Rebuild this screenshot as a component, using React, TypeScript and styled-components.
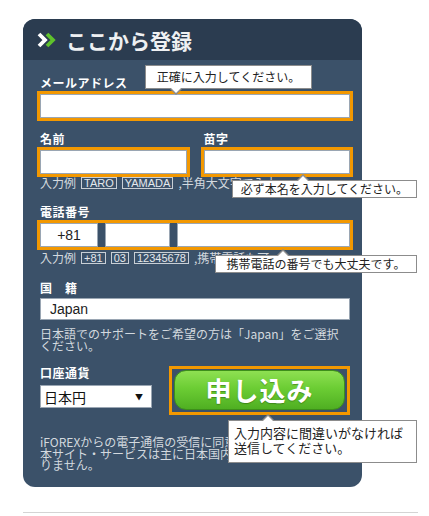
import styled, { createGlobalStyle } from "styled-components";

const GlobalStyle = createGlobalStyle`
  body {
    margin: 0;
    background: #fff;
    font-family: "Noto Sans CJK JP", "Noto Sans", sans-serif;
  }
`;

function Chevrons() {
  return (
    <svg width="22" height="16" viewBox="0 0 22 16">
      <polyline points="2,2 8,8 2,14" fill="none" stroke="#fff" strokeWidth="3.8" />
      <polyline points="10,2 16,8 10,14" fill="none" stroke="#5fc22c" strokeWidth="3.8" />
    </svg>
  );
}

export default function App() {
  return (
    <Page>
      <GlobalStyle />
      <Card>
        <Header>
          <Chevrons />
          <Title>ここから登録</Title>
        </Header>
        <Body>
          <Label>メールアドレス</Label>
          <Frame>
            <Input />
          </Frame>

          <NameGrid>
            <div>
              <Label>名前</Label>
              <Frame>
                <Input />
              </Frame>
            </div>
            <div>
              <Label>苗字</Label>
              <Frame>
                <Input />
              </Frame>
            </div>
          </NameGrid>
          <Help>
            入力例<Tag>TARO</Tag>
            <Tag>YAMADA</Tag>,半角大文字で入力
          </Help>

          <Label $mt={16}>電話番号</Label>
          <PhoneFrame>
            <Input $w={58} $center defaultValue="+81" />
            <Input $w={65} />
            <Input />
          </PhoneFrame>
          <Help $mt={2}>
            入力例<Tag>+81</Tag>
            <Tag>03</Tag>
            <Tag>12345678</Tag>,携帯電話も可
          </Help>

          <Label $mt={17} $mb={3}>国　籍</Label>
          <CountryInput defaultValue="Japan" />
          <Note>
            日本語でのサポートをご希望の方は「Japan」をご選択ください。
          </Note>

          <SubmitRow>
            <div>
              <Label $mt={0} $mb={5}>口座通貨</Label>
              <Select>
                <span>日本円</span>
                <Arrow>▼</Arrow>
              </Select>
            </div>
            <ButtonFrame>
              <SubmitButton>申し込み</SubmitButton>
            </ButtonFrame>
          </SubmitRow>

          <Footer>
            iFOREXからの電子通信の受信に同意します。
            <br />
            本サイト・サービスは主に日本国内の居住者向けではありません。
          </Footer>
        </Body>

        <Tip $left={122} $top={46} $w={167} $h={24} $arrow={30} $down>
          正確に入力してください。
        </Tip>
        <Tip $left={209} $top={161} $w={185} $h={18} $arrow={70}>
          必ず本名を入力してください。
        </Tip>
        <Tip $left={192} $top={236} $w={202} $h={18} $arrow={67}>
          携帯電話の番号でも大丈夫です。
        </Tip>
        <Tip $left={205} $top={401} $w={189} $h={43} $arrow={39} $big>
          入力内容に間違いがなければ
          <br />
          送信してください。
        </Tip>
      </Card>
      <Rule />
    </Page>
  );
}

const Page = styled.div`
  padding: 19px 0 0 23px;
`;

const Card = styled.div`
  position: relative;
  width: 339px;
  border-radius: 12px;
  background: #3b5169;
`;

const Header = styled.div`
  height: 41px;
  box-sizing: border-box;
  padding: 1px 0 0 14px;
  background: #2b3c50;
  border-radius: 12px 12px 0 0;
  display: flex;
  align-items: center;
  gap: 7px;
`;

const Title = styled.h1`
  margin: 0;
  font-size: 21px;
  line-height: 1;
  font-weight: 700;
  color: #eef0f2;
`;

const Body = styled.div`
  padding: 16px 12px 16px 17px;
`;

const Label = styled.div<{ $mt?: number; $mb?: number }>`
  margin: ${(p) => p.$mt ?? 0}px 0 ${(p) => p.$mb ?? 1}px;
  font-size: 12px;
  line-height: 14px;
  font-weight: 700;
  letter-spacing: 0.5px;
  color: #fff;
`;

const Frame = styled.div`
  margin: 0 -3px;
  border: 3px solid #f39800;
  display: flex;
`;

const PhoneFrame = styled(Frame)`
  gap: 7px;
`;

const Input = styled.input<{ $w?: number; $center?: boolean }>`
  box-sizing: border-box;
  height: 24px;
  margin: 0;
  padding: 0 6px;
  border: 1px solid #9aa6b3;
  background: #fff;
  font-family: "Liberation Sans", Arial, sans-serif;
  font-size: 14px;
  color: #222;
  text-align: ${(p) => (p.$center ? "center" : "left")};
  ${(p) => (p.$w ? `width: ${p.$w}px; flex: none;` : "flex: 1; width: 0; min-width: 0;")}
`;

const NameGrid = styled.div`
  display: grid;
  grid-template-columns: minmax(0, 1fr) minmax(0, 1fr);
  column-gap: 17px;
  margin-top: 11px;
`;

const Help = styled.div<{ $mt?: number }>`
  margin-top: ${(p) => p.$mt ?? 0}px;
  display: flex;
  align-items: center;
  gap: 5px;
  height: 12px;
  white-space: nowrap;
  font-size: 12px;
  line-height: 12px;
  color: #d3d9df;
`;

const Tag = styled.span`
  display: inline-block;
  padding: 0 2px;
  border: 1px solid #c8cfd6;
  font-family: "Liberation Sans", Arial, sans-serif;
  font-size: 11px;
  line-height: 10px;
  color: #e4e8ec;
`;

const CountryInput = styled.input`
  display: block;
  box-sizing: border-box;
  width: 310px;
  height: 22px;
  margin: 0;
  padding: 0 9px;
  border: 1px solid #9aa6b3;
  font-family: "Liberation Sans", Arial, sans-serif;
  font-size: 14px;
  color: #222;
`;

const Note = styled.p`
  margin: 8px 0 0;
  font-size: 12px;
  line-height: 11.5px;
  color: #d3d9df;
`;

const SubmitRow = styled.div`
  margin-top: 15px;
  display: flex;
  justify-content: space-between;
`;

const Select = styled.div`
  box-sizing: border-box;
  width: 112px;
  height: 23px;
  padding: 0 8px 0 3px;
  display: flex;
  align-items: center;
  justify-content: space-between;
  background: #fff;
  border: 1px solid #9aa6b3;
  font-size: 14px;
  color: #111;
`;

const Arrow = styled.span`
  font-size: 8px;
  color: #111;
`;

const ButtonFrame = styled.div`
  box-sizing: border-box;
  width: 181px;
  height: 49px;
  padding: 1px 2px 2px;
  border: 3px solid #f39800;
`;

const SubmitButton = styled.button`
  width: 100%;
  height: 100%;
  border: 1px solid #3d8f1a;
  border-radius: 12px;
  background: linear-gradient(#8ee052, #6ccd34 45%, #4faf22);
  color: #fff;
  font-family: "Noto Sans CJK JP", sans-serif;
  font-size: 26px;
  font-weight: 700;
  letter-spacing: 1px;
  line-height: 1;
  text-shadow: 0 1px 1px rgba(40, 90, 10, 0.5);
  cursor: pointer;
`;

const Footer = styled.p`
  margin: 21px 0 0;
  font-size: 12px;
  line-height: 11.5px;
  color: #d3d9df;
`;

const Tip = styled.div<{
  $left: number;
  $top: number;
  $w: number;
  $h: number;
  $arrow: number;
  $down?: boolean;
  $big?: boolean;
}>`
  position: absolute;
  left: ${(p) => p.$left}px;
  top: ${(p) => p.$top}px;
  width: ${(p) => p.$w}px;
  height: ${(p) => p.$h}px;
  box-sizing: border-box;
  background: #fff;
  border: 1px solid #8c8c8c;
  color: #222;
  font-size: ${(p) => (p.$big ? 13 : 12)}px;
  line-height: ${(p) => (p.$big ? "15px" : `${p.$h - 2}px`)};
  text-align: ${(p) => (p.$big ? "left" : "center")};
  padding: ${(p) => (p.$big ? "4px 0 0 5px" : "0")};
  white-space: nowrap;
  z-index: 2;

  &::before,
  &::after {
    content: "";
    position: absolute;
    border-style: solid;
    border-color: transparent;
  }
  &::before {
    left: ${(p) => p.$arrow - 6}px;
    ${(p) =>
      p.$down
        ? "bottom: -7px; border-width: 6px 6px 0; border-top-color: #8c8c8c;"
        : "top: -7px; border-width: 0 6px 6px; border-bottom-color: #8c8c8c;"}
  }
  &::after {
    left: ${(p) => p.$arrow - 5}px;
    ${(p) =>
      p.$down
        ? "bottom: -5px; border-width: 5px 5px 0; border-top-color: #fff;"
        : "top: -5px; border-width: 0 5px 5px; border-bottom-color: #fff;"}
  }
`;

const Rule = styled.div`
  width: 395px;
  height: 1px;
  margin-top: 25px;
  background: #d4d4d4;
`;
